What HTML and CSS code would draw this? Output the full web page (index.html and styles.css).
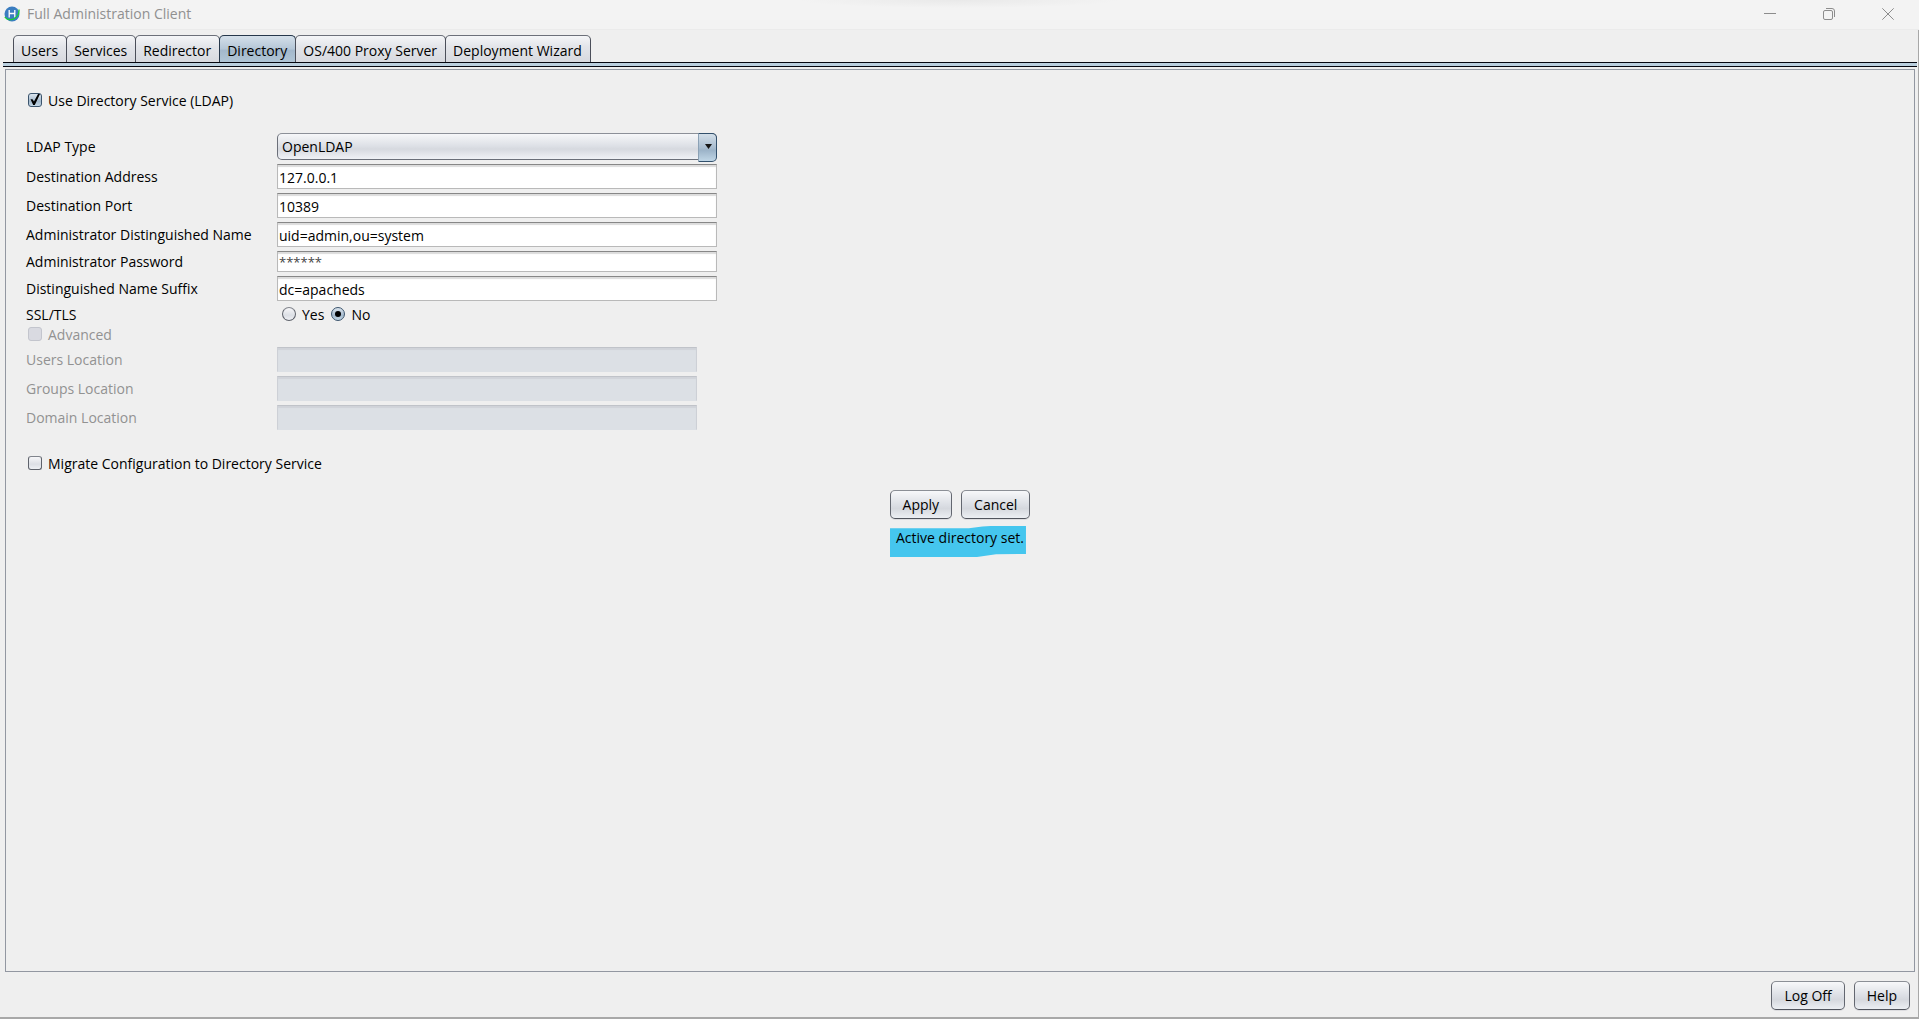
FILE: index.html
```html
<!DOCTYPE html>

<html lang="en">
    <head>
        <meta charset="utf-8">
        <title>Full Administration Client</title>
        <link rel="stylesheet" href="styles.css">
    </head>

    <body>

        <header class="titlebar">
            <svg class="appIcon" viewBox="0 0 16 16" aria-hidden="true">
                <circle cx="8" cy="8" r="7.5" fill="#3b7dc0"/>
                <path d="M5.2 4v7.500M10.8 4v7.500M5.2 7.500h5.600" stroke="#fff" stroke-width="1.300" fill="none"/>
                <path d="M0.800 11c2 3 6.500 3.500 10 1.200c3-2 4.500-5 4.200-8.700" stroke="#18d232" stroke-width="1.300" fill="none"/>
            </svg>
            <span class="windowTitle">Full Administration Client</span>
            <div class="windowButtons">
                <button type="button" aria-label="Minimize">
                    <svg viewBox="0 0 12 12"><path d="M0 5.500h12"/></svg>
                </button>
                <button type="button" aria-label="Restore">
                    <svg viewBox="0 0 12 12"><rect x="0.500" y="2.500" width="9" height="9" rx="1.500"/><path d="M3 0.500h6a2.500 2.500 0 0 1 2.500 2.500v6"/></svg>
                </button>
                <button type="button" aria-label="Close">
                    <svg viewBox="0 0 12 12"><path d="M0.300 0.300l11.400 11.400M11.700 0.300l-11.400 11.400"/></svg>
                </button>
            </div>
        </header>

        <div class="window">

            <nav class="tabs">
                <button type="button" class="tab">Users</button>
                <button type="button" class="tab">Services</button>
                <button type="button" class="tab">Redirector</button>
                <button type="button" class="tab selected">Directory</button>
                <button type="button" class="tab">OS/400 Proxy Server</button>
                <button type="button" class="tab">Deployment Wizard</button>
            </nav>
            <div class="tabStrip"></div>

            <main class="panel">
                <form>
                    <label class="check"><input type="checkbox" checked>Use Directory Service (LDAP)</label>

                    <div class="fields">
                        <label for="ldapType">LDAP Type</label>
                        <div class="combo">
                            <select id="ldapType"><option>OpenLDAP</option></select>
                        </div>

                        <label for="address">Destination Address</label>
                        <input class="text" id="address" type="text" value="127.0.0.1">

                        <label for="port">Destination Port</label>
                        <input class="text" id="port" type="text" value="10389">

                        <label for="adminName">Administrator Distinguished Name</label>
                        <input class="text" id="adminName" type="text" value="uid=admin,ou=system">

                        <label for="adminPassword">Administrator Password</label>
                        <input class="text masked" id="adminPassword" type="text" value="******" autocomplete="off">

                        <label for="suffix">Distinguished Name Suffix</label>
                        <input class="text" id="suffix" type="text" value="dc=apacheds">
                    </div>

                    <div class="sslRow" role="radiogroup" aria-labelledby="sslLabel">
                        <span id="sslLabel">SSL/TLS</span>
                        <div class="radios">
                            <label><input type="radio" name="ssl">Yes</label>
                            <label><input type="radio" name="ssl" checked>No</label>
                        </div>
                    </div>

                    <label class="check advanced"><input type="checkbox" disabled>Advanced</label>

                    <div class="fields locations">
                        <label for="usersLoc">Users Location</label>
                        <input class="text" id="usersLoc" type="text" disabled>

                        <label for="groupsLoc">Groups Location</label>
                        <input class="text" id="groupsLoc" type="text" disabled>

                        <label for="domainLoc">Domain Location</label>
                        <input class="text" id="domainLoc" type="text" disabled>
                    </div>

                    <label class="check migrate"><input type="checkbox">Migrate Configuration to Directory Service</label>

                    <div class="actions">
                        <div class="buttons">
                            <button type="button" class="push">Apply</button>
                            <button type="button" class="push">Cancel</button>
                        </div>
                        <output class="status">Active directory set.</output>
                    </div>
                </form>
            </main>

            <footer class="buttons footer">
                <button type="button" class="push">Log Off</button>
                <button type="button" class="push">Help</button>
            </footer>

        </div>

    </body>

</html>
```
FILE: styles.css
```css
* { box-sizing: border-box; }

body
{
    display:          flex;
    flex-direction:   column;
    min-height:       100vh;
    margin:           0;
    background-color: #efefef;
    color:            #000;
    font-family:      "Open Sans", "Noto Sans", sans-serif;
    font-size:        14px;
    line-height:      20px;
}

button, input, select
{
    font:    inherit;
    color:   inherit;
    margin:  0;
}

/* title bar */

.titlebar
{
    display:          flex;
    align-items:      center;
    height:           30px;
    padding:          0 2px 1px 4px;
    border-bottom:    1px solid #ebebeb;
    background:       radial-gradient(ellipse 160px 8px at 50% 0, #e9e9e9, #f3f3f3);
    color:            #909090;
}

.appIcon
{
    width:        16px;
    height:       16px;
    margin-right: 7px;
}

.windowButtons
{
    display:     flex;
    margin-left: auto;
}

.windowButtons button
{
    display:         flex;
    align-items:     center;
    justify-content: center;
    width:           59px;
    height:          28px;
    border:          none;
    padding:         0;
    background:      none;
}

.windowButtons svg
{
    width:  12px;
    height: 12px;
    fill:   none;
    stroke: #8c8c8c;
}

/* window frame and tabs */

.window
{
    display:        flex;
    flex:           1;
    flex-direction: column;
    padding:        5px 1px 7px 3px;
    border-right:   1px solid #a8a8a8;
    border-bottom:  2px solid #a8a8a8;
}

.tabs
{
    display:      flex;
    padding-left: 10px;
}

.tab
{
    height:        27px;
    margin-right:  -1px;
    padding:       4px 8px 0 7px;
    border:        1px solid #4b4f5a;
    border-top-color: #6c707a;
    border-bottom: none;
    border-radius: 5px 5px 0 0;
    background:    linear-gradient(#f5f6f8, #e3e5ea 40%, #d7d9df);
}

.tab.selected
{
    border-color: #26384c;
    background:   linear-gradient(#d5e0ea, #b4c6d7 50%, #a3b8cc 55%, #b0c5d6);
}

.tabStrip
{
    height:           5px;
    border:           solid #05060f;
    border-width:     1px 0;
    background-color: #bacfde;
}

.panel
{
    flex:    1;
    margin:  2px 2px 0;
    padding: 21px 20px;
    border:  1px solid #9297a1;
}

/* form */

.fields
{
    display:               grid;
    grid-template-columns: 251px 440px;
    row-gap:               4px;
    align-items:           center;
    margin-top:            22px;
}

.fields.locations
{
    grid-template-columns: 251px 420px;
    margin-top:            2px;
    color:                 #929292;
}

.combo
{
    position: relative;
}

.combo select
{
    display:       block;
    width:         100%;
    height:        27px;
    padding:       1px 4px 0;
    border:        1px solid #6b6f79;
    border-top-color: #8c9098;
    border-radius: 5px;
    appearance:    none;
    background:    linear-gradient(#f6f7f9, #dcdfe5 50%, #d6d9df 60%, #f0f2f6);
}

/* drop-down arrow over the right end of the select */
.combo::after
{
    content:        "";
    position:       absolute;
    top:            0;
    right:          0;
    width:          17px;
    height:         27px;
    border:         1px solid #32506c;
    border-left-color: #8ba1b5;
    border-radius:  0 5px 5px 0;
    background:     linear-gradient(#d3dfe9, #a9bdd0 50%, #9cb3c8 60%, #c0d6e6);
    pointer-events: none;
}

.combo::before
{
    content:        "";
    position:       absolute;
    z-index:        1;
    top:            11px;
    right:          5px;
    width:          7px;
    height:         5px;
    background:     #151515;
    clip-path:      polygon(0 0, 100% 0, 50% 100%);
    pointer-events: none;
}

.text
{
    width:         100%;
    height:        25px;
    padding:       1px 1px 0;
    border:        1px solid #b9b9b9;
    border-top-color: #878787;
    border-radius: 0;
    background:    #fff;
    box-shadow:    inset 0 2px 1px #dcdcdc;
}

.text:disabled
{
    border-color:     #cdd0d6;
    border-top-color: #c0c3c9;
    border-bottom-color: #dce0e5;
    background:       #dce0e5;
    box-shadow:       inset 0 2px 1px #d0d3d9;
}

.text.masked
{
    height:    21px;
    font-size: 13px;
    color:     #444;
}

.check
{
    display:     flex;
    align-items: center;
    width:       max-content;
    padding-left: 2px;
}

input[type="checkbox"], input[type="radio"]
{
    appearance:    none;
    display:       flex;
    align-items:   center;
    justify-content: center;
    flex:          none;
    width:         14px;
    height:        14px;
    border:        1px solid #5e626b;
    border-top-color: #80848c;
    border-radius: 3px;
    background:    linear-gradient(#f7f7f9, #dcdfe5 60%, #eef0f4);
}

input[type="checkbox"]
{
    margin: 0 6px 3px 0;
}

input[type="radio"]
{
    border-radius: 50%;
    margin: 0 6px 3px 0;
}

input:checked[type="checkbox"], input:checked[type="radio"]
{
    border-color: #3b546d;
    background:   linear-gradient(#dbe5ee, #a5bacd 60%, #c2d6e5);
}

input:checked[type="checkbox"]::before
{
    content:    "";
    width:      10px;
    height:     11px;
    background: #000;
    clip-path:  polygon(5% 48%, 25% 48%, 40% 68%, 80% 0, 100% 0, 48% 100%, 32% 100%);
}

input:checked[type="radio"]::before
{
    content:       "";
    width:         6px;
    height:        6px;
    border-radius: 50%;
    background:    #000;
}

input:disabled[type="checkbox"]
{
    border-color: #c3c5cd;
    background:   #d9dae1;
}

.fields label
{
    padding-top: 1px;
}

.sslRow
{
    display: grid;
    grid-template-columns: 251px auto;
    margin-top: 4px;
}

.radios
{
    display:      flex;
    gap:          7px;
    padding-left: 5px;
}

.radios label
{
    display:     flex;
    align-items: center;
}

.advanced
{
    color: #929292;
}

.migrate
{
    margin-top: 24px;
}

.actions
{
    display:        flex;
    flex-direction: column;
    align-items:    center;
    gap:            7px;
    margin-top:     16px;
}

.buttons
{
    display: flex;
    gap:     9px;
}

.push
{
    height:        29px;
    padding:       1px 12px 0;
    border:        1px solid #636770;
    border-top-color: #8b8f96;
    border-bottom-color: #50545d;
    border-radius: 5px;
    background:    linear-gradient(#f7f8fa, #dcdfe5 50%, #d5d8de 65%, #eceff3);
    box-shadow:    0 1px 0 #dcdcdf;
}

/* highlighted result line, drawn like a marker stroke */
.status
{
    height:     31px;
    margin-right: 4px;
    padding:    2px 2px 0 6px;
    background: #45c6ee;
    clip-path:  polygon(0 7%, 58% 7%, 68% 2%, 74% 0, 100% 0, 100% 90%, 78% 91%, 64% 100%, 0 100%);
}

.footer
{
    justify-content: flex-end;
    padding:         9px 7px 0 0;
}
```
